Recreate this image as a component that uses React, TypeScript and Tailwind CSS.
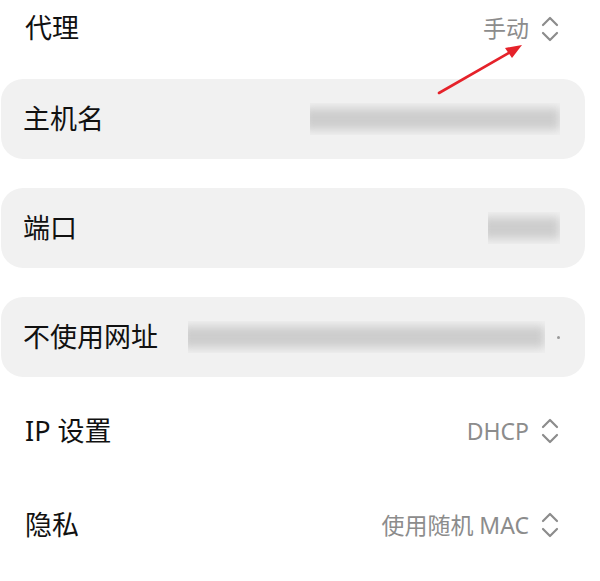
import type { ReactNode } from "react"

const font = { fontFamily: '"Noto Sans", "Noto Sans CJK SC", sans-serif' }

// up/down chevron pair used by the picker rows
const UpDown = () => (
    <svg width="20" height="28" viewBox="0 0 20 28" fill="none" stroke="#8c8c8c" strokeWidth="2.2" strokeLinecap="round" strokeLinejoin="round">
        <path d="M3 10 L10 3 L17 10" />
        <path d="M3 18 L10 25 L17 18" />
    </svg>
)

const Picker = ({ label, value, className }: { label: string, value: string, className: string }) => (
    <div className={`flex items-center justify-between pl-[25px] pr-[40px] h-[48px] ${className}`}>
        <span className="text-[27px] text-[#111]">{label}</span>
        <div className="flex items-center gap-[11px]">
            <span className="text-[23px] text-[#8c8c8c]">{value}</span>
            <UpDown />
        </div>
    </div>
)

const Field = ({ label, children, className }: { label: string, children: ReactNode, className: string }) => (
    <div className={`flex items-center ml-[1px] w-[584px] h-[80px] rounded-[22px] bg-[#f1f1f1] pl-[22px] pr-[25px] ${className}`}>
        <span className="text-[27px] text-[#111] shrink-0">{label}</span>
        <div className="flex-1 flex items-center justify-end h-full">{children}</div>
    </div>
)

// masked value, rendered as a soft grey smear
const Masked = ({ width }: { width: string }) => (
    <div className={`relative h-[32px] overflow-hidden ${width}`}>
        <div className="absolute -left-[6px] right-0 top-[5px] h-[22px] bg-[#cdcdcd] blur-[5px]" />
    </div>
)

export default function App() {
    return (
        <div className="relative w-[600px] h-[581px] bg-white overflow-hidden" style={font}>
            <div className="flex items-center justify-between pl-[25px] pr-[40px] h-[57px]">
                <span className="text-[27px] text-[#111]">代理</span>
                <div className="flex items-center gap-[11px]">
                    <span className="text-[23px] text-[#8c8c8c]">手动</span>
                    <UpDown />
                </div>
            </div>

            <Field label="主机名" className="mt-[22px]">
                <Masked width="w-[250px]" />
            </Field>
            <Field label="端口" className="mt-[29px]">
                <Masked width="w-[72px]" />
            </Field>
            <Field label="不使用网址" className="mt-[29px]">
                <div className="flex items-center w-full pl-[30px]">
                    <Masked width="flex-1" />
                    <span className="ml-[12px] w-[3px] h-[3px] rounded-full bg-[#999]" />
                </div>
            </Field>

            <Picker label="IP 设置" value="DHCP" className="mt-[30px]" />
            <Picker label="隐私" value="使用随机 MAC" className="mt-[46px]" />

            <svg className="absolute left-0 top-0" width="600" height="581" viewBox="0 0 600 581">
                <line x1="439" y1="93" x2="512" y2="51" stroke="#e5222a" strokeWidth="2.6" strokeLinecap="round" />
                <path d="M522 45 L505 48 L512 58 Z" fill="#e5222a" />
            </svg>
        </div>
    )
}
